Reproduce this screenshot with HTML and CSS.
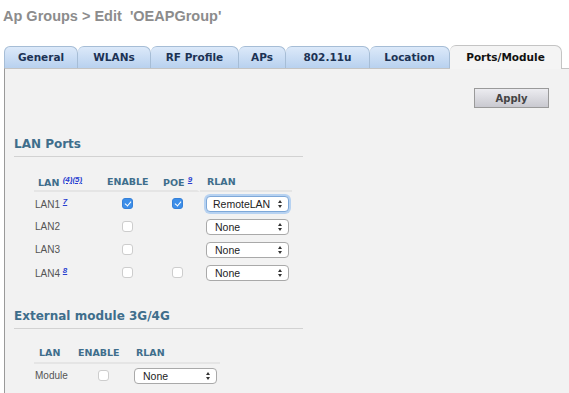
FILE: index.html
```html
<!DOCTYPE html>
<html lang="en">
<head>
	<meta charset="UTF-8">
	<title>Ap Groups - Ports/Module</title>
	<link rel="stylesheet" href="styles.css">
</head>
<body>
	<div class="title">Ap Groups &gt; Edit&nbsp; 'OEAPGroup'</div>
	<div class="tabs">
		<div class="tab t-general">General</div>
		<div class="tab t-wlans">WLANs</div>
		<div class="tab t-rf">RF Profile</div>
		<div class="tab t-aps">APs</div>
		<div class="tab t-80211">802.11u</div>
		<div class="tab t-loc">Location</div>
		<div class="tab t-ports active">Ports/Module</div>
	</div>
	<div class="panel">
		<div class="actions"><button type="button" class="btn">Apply</button></div>

		<div class="section">LAN Ports</div>
		<table class="ports lan">
			<colgroup>
				<col class="w-lan"><col class="w-en"><col class="w-poe"><col class="w-rlan">
			</colgroup>
			<tr>
				<th class="h-lan">LAN <a class="ref" href="#">(4)(5)</a></th>
				<th class="h-en">ENABLE</th>
				<th class="h-poe">POE <a class="ref" href="#">9</a></th>
				<th class="h-rlan">RLAN</th>
			</tr>
			<tr>
				<td class="name">LAN1 <a class="ref" href="#">7</a></td>
				<td class="box"><span class="chk on"></span></td>
				<td class="box"><span class="chk on"></span></td>
				<td class="pick"><span class="sel focus">RemoteLAN<span class="arr"></span></span></td>
			</tr>
			<tr>
				<td class="name">LAN2</td>
				<td class="box"><span class="chk"></span></td>
				<td class="box"></td>
				<td class="pick"><span class="sel">None<span class="arr"></span></span></td>
			</tr>
			<tr>
				<td class="name">LAN3</td>
				<td class="box"><span class="chk"></span></td>
				<td class="box"></td>
				<td class="pick"><span class="sel">None<span class="arr"></span></span></td>
			</tr>
			<tr>
				<td class="name">LAN4 <a class="ref" href="#">8</a></td>
				<td class="box"><span class="chk"></span></td>
				<td class="box"><span class="chk"></span></td>
				<td class="pick"><span class="sel">None<span class="arr"></span></span></td>
			</tr>
		</table>

		<div class="section sec2">External module 3G/4G</div>
		<table class="ports module">
			<colgroup>
				<col class="m-lan"><col class="m-en"><col class="m-rlan">
			</colgroup>
			<tr>
				<th class="hm-lan">LAN</th>
				<th class="hm-en">ENABLE</th>
				<th class="hm-rlan">RLAN</th>
			</tr>
			<tr>
				<td class="name">Module</td>
				<td class="box"><span class="chk"></span></td>
				<td class="pick pm"><span class="sel">None<span class="arr"></span></span></td>
			</tr>
		</table>
	</div>
</body>
</html>
```
FILE: styles.css
```css
html,body{margin:0;padding:0;background:#fff;}
body{font-family:"Liberation Sans",Arial,sans-serif;width:569px;height:393px;overflow:hidden;}

.title{font-size:14.5px;font-weight:bold;color:#8c8c8c;padding:8px 0 0 3px;height:45px;box-sizing:border-box;}

/* tabs */
.tabs{display:flex;align-items:flex-end;margin-left:4px;height:23px;}
.tab{box-sizing:border-box;height:22px;line-height:21px;text-align:center;font-family:"DejaVu Sans",Verdana,sans-serif;font-size:10.5px;font-weight:bold;color:#1c3254;background:linear-gradient(#dce9f9,#b8d1ef);border:1px solid #a6bdd6;border-bottom:none;border-left:none;border-radius:6px 7px 0 0;}
.t-general{width:74px;border-left:1px solid #a6bdd6;}
.t-wlans{width:73px;}
.t-rf{width:88px;}
.t-aps{width:47px;}
.t-80211{width:84px;}
.t-loc{width:80px;}
.t-ports{width:112px;}
.tab.active{background:#f4f4f4;color:#111;height:24px;line-height:22px;border-color:#c4c4c4;position:relative;top:1px;}

.panel{margin-left:4px;border-left:1px solid #9a9a9a;border-top:1px solid #c4c4c4;background:#f2f2f2;height:330px;box-sizing:border-box;padding-top:19px;}

.actions{display:flex;justify-content:flex-end;padding-right:20px;}
.btn{width:75px;height:20px;font-family:"DejaVu Sans",Verdana,sans-serif;font-size:10px;font-weight:bold;color:#444;background:linear-gradient(#ececf0,#c9c9d0);border:1px solid #9a9a9a;border-radius:0;padding:0;}

.section{font-family:"DejaVu Sans",Verdana,sans-serif;font-size:12px;font-weight:bold;color:#3f6e8c;margin:29px 0 0 9px;width:289px;padding-bottom:5px;border-bottom:1px solid #d2d2d2;}
.sec2{margin-top:25px;}

/* port tables */
.ports{border-collapse:separate;border-spacing:0;table-layout:fixed;margin:16px 0 0 29px;font-size:10px;color:#555;}
.ports th{font-family:"DejaVu Sans",Verdana,sans-serif;font-size:9.5px;font-weight:bold;color:#3f6e8c;text-align:left;height:17px;padding:0;border-bottom:2px solid #e5e5e5;vertical-align:middle;white-space:nowrap;}
.ports td{height:23px;padding:0;vertical-align:middle;white-space:nowrap;}
.lan{width:258px;}
.w-lan{width:66px;}
.w-en{width:55px;}
.w-poe{width:45px;}
.w-rlan{width:92px;}
.h-lan{padding-left:4px !important;}
.h-en{padding-left:7px !important;}
.h-poe{padding-left:8px !important;border-right:3px solid #f2f2f2;}
.h-rlan{padding-left:7px !important;}
.name{padding-left:1px !important;}
.box{text-align:center;}
.pick{padding-left:6px !important;}

.module{width:186px;margin-top:14px;}
.m-lan{width:42px;}
.m-en{width:55px;}
.m-rlan{width:89px;}
.module th{height:19px;}
.hm-lan{padding-left:5px !important;}
.hm-en{padding-left:2px !important;}
.hm-rlan{padding-left:5px !important;}
.pick.pm{padding-left:3px !important;}

.ref{font-size:8px;font-style:italic;color:#2a3fd0;text-decoration:underline;vertical-align:4px;font-weight:bold;font-family:"Liberation Sans",Arial,sans-serif;}

.chk{display:inline-block;width:11px;height:11px;box-sizing:border-box;border:1px solid #cdcdcd;border-radius:3px;background:#fff;vertical-align:middle;position:relative;}
.chk.on{background:#3c8ee9;border-color:#3580d8;}
.chk.on::after{content:"";position:absolute;left:3px;top:1px;width:3px;height:5px;border:solid #fff;border-width:0 1.5px 1.5px 0;transform:rotate(40deg);}

.sel{display:inline-flex;align-items:center;justify-content:space-between;box-sizing:border-box;width:83px;height:16px;padding:0 5px 0 8px;background:#fff;border:1px solid #a9a9a9;border-radius:4px;font-size:10.5px;color:#222;vertical-align:middle;}
.sel.focus{border-color:#7ea8d8;box-shadow:0 0 0 2px #b7d2f1;padding-left:6px;}
.arr{display:inline-block;width:5px;height:8px;position:relative;}
.arr::before,.arr::after{content:"";position:absolute;left:0;border-left:2.5px solid transparent;border-right:2.5px solid transparent;}
.arr::before{top:0;border-bottom:3px solid #333;}
.arr::after{bottom:0;border-top:3px solid #333;}
```
